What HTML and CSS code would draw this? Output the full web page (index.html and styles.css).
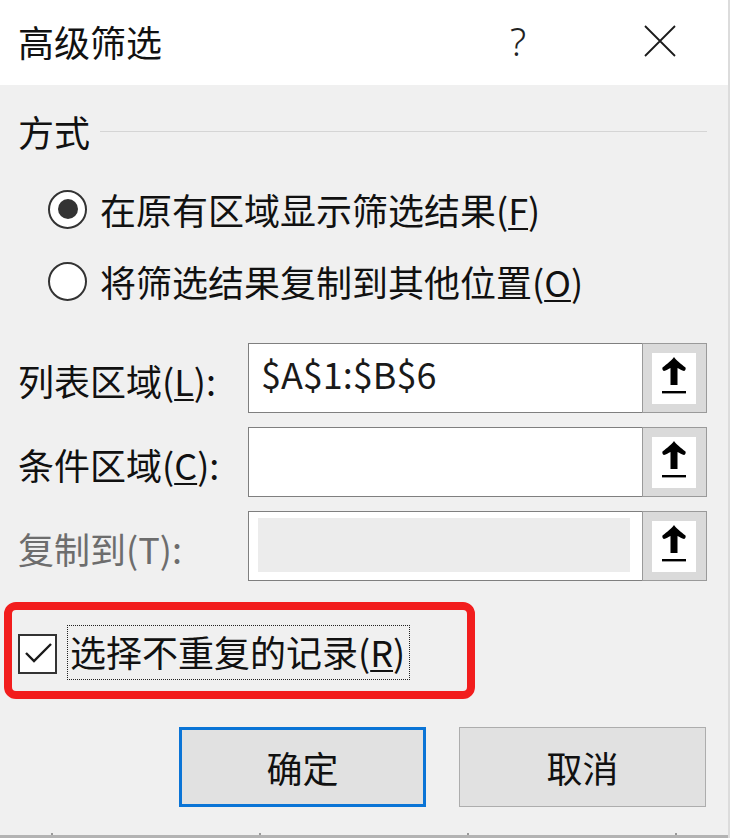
FILE: index.html
```html
<!DOCTYPE html>
<html lang="zh-CN">
<head>
<meta charset="utf-8">
<title>高级筛选</title>
<link rel="stylesheet" href="styles.css">
</head>
<body>
<div class="dialog">
  <header class="titlebar">
    <span class="title">高级筛选</span>
    <span class="help">?</span>
    <span class="close">
      <svg width="32" height="32" viewBox="0 0 32 32"><path d="M1 1 L31 31 M31 1 L1 31" stroke="#1a1a1a" stroke-width="1.8" fill="none"/></svg>
    </span>
  </header>

  <main class="content">
    <div class="group-head">
      <span class="group-title">方式</span>
      <span class="rule"></span>
    </div>

    <div class="radio-row first">
      <span class="radio checked"></span>
      <span class="opt">在原有区域显示筛选结果(<u>F</u>)</span>
    </div>
    <div class="radio-row">
      <span class="radio"></span>
      <span class="opt">将筛选结果复制到其他位置(<u>O</u>)</span>
    </div>

    <div class="fields">
      <div class="field-row">
        <span class="label">列表区域(<u>L</u>):</span>
        <div class="range">
          <div class="input">$A$1:$B$6</div>
          <div class="pick"><span class="pick-face">
            <svg width="26" height="38" viewBox="0 0 26 38"><path d="M13 0 C11 3 6 7 1.5 10.5 C1 11.5 1.5 13.5 3 14 C5 13.5 7.5 12 9.5 11 L9.5 28 L16.5 28 L16.5 11 C18.5 12 21 13.5 23 14 C24.5 13.5 25 11.5 24.5 10.5 C20 7 15 3 13 0 Z" fill="#000"/><rect x="1" y="34" width="24" height="2.4" fill="#000"/></svg>
          </span></div>
        </div>
      </div>
      <div class="field-row">
        <span class="label">条件区域(<u>C</u>):</span>
        <div class="range">
          <div class="input"></div>
          <div class="pick"><span class="pick-face">
            <svg width="26" height="38" viewBox="0 0 26 38"><path d="M13 0 C11 3 6 7 1.5 10.5 C1 11.5 1.5 13.5 3 14 C5 13.5 7.5 12 9.5 11 L9.5 28 L16.5 28 L16.5 11 C18.5 12 21 13.5 23 14 C24.5 13.5 25 11.5 24.5 10.5 C20 7 15 3 13 0 Z" fill="#000"/><rect x="1" y="34" width="24" height="2.4" fill="#000"/></svg>
          </span></div>
        </div>
      </div>
      <div class="field-row">
        <span class="label disabled">复制到(T):</span>
        <div class="range">
          <div class="input is-disabled"><span class="disabled-fill"></span></div>
          <div class="pick"><span class="pick-face">
            <svg width="26" height="38" viewBox="0 0 26 38"><path d="M13 0 C11 3 6 7 1.5 10.5 C1 11.5 1.5 13.5 3 14 C5 13.5 7.5 12 9.5 11 L9.5 28 L16.5 28 L16.5 11 C18.5 12 21 13.5 23 14 C24.5 13.5 25 11.5 24.5 10.5 C20 7 15 3 13 0 Z" fill="#000"/><rect x="1" y="34" width="24" height="2.4" fill="#000"/></svg>
          </span></div>
        </div>
      </div>
    </div>

    <div class="highlight">
      <span class="checkbox">
        <svg width="35" height="36" viewBox="0 0 35 36"><polyline points="6,17 14,25 31,8" fill="none" stroke="#1a1a1a" stroke-width="2.4"/></svg>
      </span>
      <span class="focus">选择不重复的记录(<u>R</u>)</span>
    </div>

    <div class="buttons">
      <button class="btn default">确定</button>
      <button class="btn">取消</button>
    </div>
  </main>

  <footer class="bottom">
    <div class="ticks"></div>
    <div class="strip"></div>
  </footer>
</div>
</body>
</html>
```

FILE: styles.css
```css
* { box-sizing: border-box; }
html, body { margin: 0; padding: 0; }
body {
  width: 730px;
  height: 838px;
  overflow: hidden;
  background: #f0f0f0;
  font-family: "Noto Sans CJK SC", "Noto Sans", sans-serif;
  color: #111;
}
u { text-decoration: underline; text-decoration-thickness: 2px; text-underline-offset: 3px; }

.dialog {
  width: 730px;
  height: 838px;
  display: flex;
  flex-direction: column;
  border-right: 2px solid #dcdcdc;
}

/* title bar */
.titlebar {
  height: 85px;
  flex: none;
  background: #fff;
  display: flex;
  align-items: center;
  padding-left: 18px;
}
.title {
  font-size: 36px;
  line-height: 44px;
  font-weight: 400;
  margin-top: -4px;
}
.help {
  margin-left: auto;
  width: 40px;
  text-align: center;
  font-family: "Noto Sans", sans-serif;
  font-weight: 300;
  font-size: 38px;
  line-height: 44px;
  margin-top: -4px;
  color: #222;
}
.close {
  width: 56px;
  height: 44px;
  margin-left: 94px;
  margin-right: 40px;
  display: flex;
  align-items: center;
  justify-content: center;
  margin-top: -4px;
}

/* content */
.content {
  flex: 1;
  display: flex;
  flex-direction: column;
  padding: 0 21px 0 18px;
}
.group-head {
  margin-top: 24px;
  height: 44px;
  display: flex;
  align-items: center;
}
.group-title {
  font-size: 36px;
  line-height: 44px;
}
.rule {
  flex: 1;
  height: 1px;
  background: #d5d5d5;
  margin-left: 10px;
}

.radio-row {
  height: 56px;
  display: flex;
  align-items: center;
  padding-left: 30px;
  margin-top: 16px;
}
.radio-row.first { margin-top: 28px; }
.radio {
  width: 39px;
  height: 39px;
  border-radius: 50%;
  border: 2px solid #333;
  background: #fff;
  display: flex;
  align-items: center;
  justify-content: center;
  flex: none;
}
.radio.checked::after {
  content: "";
  width: 20px;
  height: 20px;
  border-radius: 50%;
  background: #333;
}
.opt {
  font-size: 36px;
  line-height: 44px;
  margin-left: 13px;
}

/* fields */
.fields {
  margin-top: 34px;
  display: flex;
  flex-direction: column;
  gap: 14px;
}
.field-row {
  height: 70px;
  display: flex;
  align-items: center;
}
.label {
  width: 230px;
  font-size: 36px;
  line-height: 44px;
  margin-top: 4px;
}
.label.disabled { color: #6d6d6d; }
.range {
  display: flex;
  height: 70px;
  width: 459px;
}
.input {
  flex: 1;
  background: #fff;
  border: 1px solid #7f7f7f;
  border-right: none;
  font-size: 36px;
  line-height: 44px;
  padding: 7px 12px;
  color: #1a1a1a;
}
.input.is-disabled {
  padding: 6px 12px 8px 9px;
  display: flex;
}
.disabled-fill {
  flex: 1;
  background: #ececec;
}
.pick {
  width: 65px;
  flex: none;
  border: 1px solid #9a9a9a;
  background: #dadada;
  padding: 9px 10px 8px 9px;
  display: flex;
}
.pick-face {
  flex: 1;
  background: #fff;
  display: flex;
  justify-content: center;
  align-items: flex-start;
  padding-top: 4px;
}

/* highlighted checkbox */
.highlight {
  margin-top: 21px;
  margin-left: -14px;
  width: 471px;
  height: 97px;
  border: 8px solid #f21d1d;
  border-radius: 12px;
  display: flex;
  align-items: center;
  padding-left: 6px;
}
.checkbox {
  width: 39px;
  height: 40px;
  border: 2px solid #333;
  background: #fff;
  flex: none;
  display: flex;
  margin-top: 6px;
}
.focus {
  margin-left: 10px;
  height: 55px;
  width: 343px;
  border: 1px dotted #222;
  font-size: 36px;
  line-height: 50px;
  padding-left: 2px;
  margin-top: 4px;
}

/* buttons */
.buttons {
  margin-top: 28px;
  display: flex;
  justify-content: flex-end;
  gap: 33px;
  padding-right: 1px;
}
.btn {
  width: 247px;
  height: 80px;
  background: #e1e1e1;
  border: 1px solid #adadad;
  font-family: "Noto Sans CJK SC", "Noto Sans", sans-serif;
  font-size: 36px;
  color: #111;
  padding: 0;
}
.btn.default {
  border: 3px solid #0a74d6;
}

/* bottom strip */
.bottom {
  flex: none;
  height: 5px;
}
.ticks {
  height: 2px;
  background: repeating-linear-gradient(to right, transparent 0 51px, #9a9a9a 51px 53px, transparent 53px 208px);
}
.strip {
  height: 3px;
  background: #b3b3b3;
}
```
